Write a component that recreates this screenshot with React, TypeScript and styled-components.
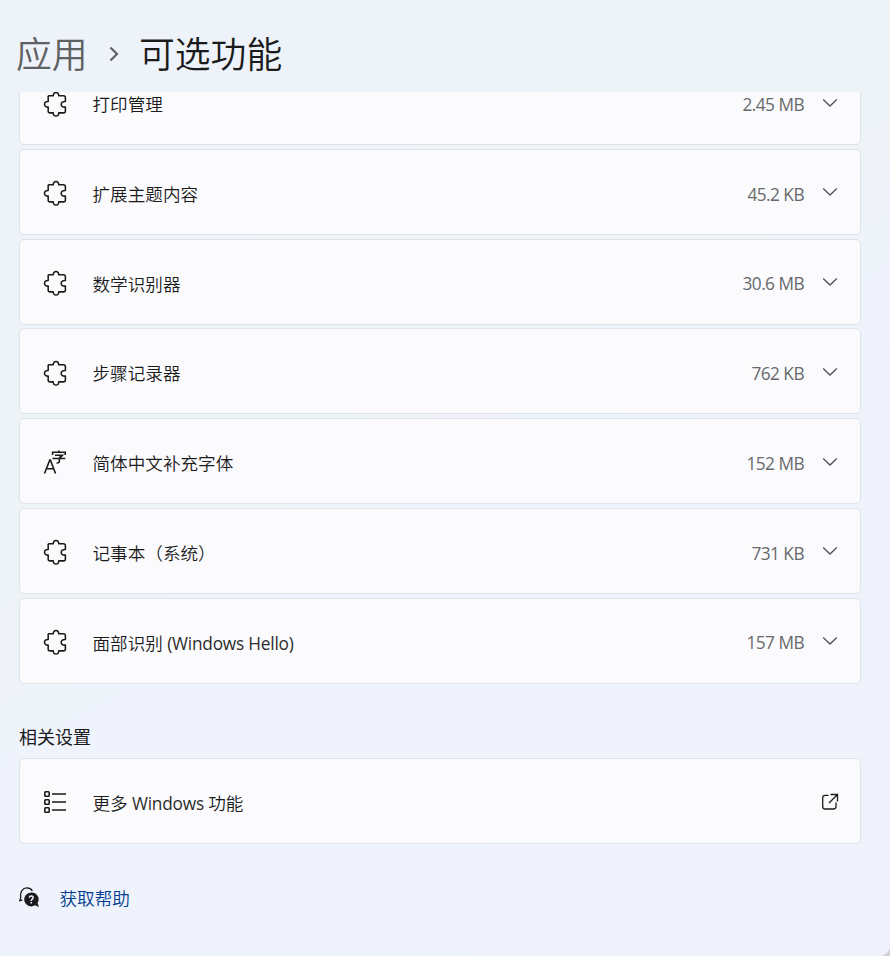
import React from "react";
import styled, { createGlobalStyle, css } from "styled-components";

const GlobalStyle = createGlobalStyle`
  * { box-sizing: border-box; }
  html, body { margin: 0; padding: 0; }
  body {
    background: #cfd1d3;
    color: #1b1b1b;
    font-family: "Open Sans", "Noto Sans CJK SC", sans-serif;
  }
`;

const Window = styled.main`
  width: 890px;
  height: 956px;
  overflow: hidden;
  padding-left: 19px;
  border-bottom-right-radius: 10px;
  background: linear-gradient(151deg, #eef3fb 0%, #eef3fa 18%, #eef3f7 34%, #eef3f7 42%, #eff3fb 52%, #eff2fb 100%);
`;

const Breadcrumb = styled.h1`
  display: flex;
  align-items: center;
  height: 92px;
  margin: 0 0 0 -3px;
  padding-top: 15px;
  font-size: 35.8px;
  font-weight: 350;
  line-height: 54px;
  white-space: nowrap;
`;

const Parent = styled.span`
  width: 72px;
  color: #5f6163;
`;

const Separator = styled.svg`
  width: 12px;
  height: 16px;
  margin: 0 19px 0 20px;
`;

const Features = styled.section`
  display: flex;
  flex-direction: column;
  gap: 3.75px;
  width: 842px;
  height: 591.6px;
  overflow: hidden;
  justify-content: flex-end;
`;

const Card = styled.div`
  display: flex;
  flex: none;
  align-items: center;
  width: 842px;
  height: 86px;
  padding: 0 21px 0 23px;
  border: 1px solid #e0e4ea;
  border-radius: 5px;
  background: rgba(252, 252, 254, 0.9);
  background-clip: padding-box;
`;

const IconSlot = styled.span`
  display: flex;
  width: 26px;
  height: 26px;
  margin-top: 3px;
`;

const textLine = css`
  font-size: 17.6px;
  font-weight: 350;
  line-height: 26px;
  white-space: pre;
`;

const Name = styled.span`
  ${textLine}
  flex: 1;
  margin: 4.2px 0 0 23.5px;
`;

const Latin = styled.span`
  color: #2c2c2c;
  font-size: 17.3px;
  font-weight: 400;
  line-height: 0;
  letter-spacing: -0.22px;
`;

const Size = styled.span`
  color: #67696b;
  font-size: 17.3px;
  font-weight: 400;
  line-height: 26px;
  letter-spacing: -0.55px;
  margin: 5.8px 18px 0 0;
`;

const Chevron = styled.svg`
  width: 16px;
  height: 10px;
  margin: 1px 1px 0 0;
`;

const SectionTitle = styled.h2`
  ${textLine}
  margin: 40.4px 0 8px;
  font-size: 18px;
  font-weight: 400;
`;

const Help = styled.a`
  display: flex;
  align-items: center;
  margin-top: 41px;
  color: #003e92;
  text-decoration: none;
`;

const HelpText = styled.span`
  ${textLine}
  margin-left: 19.5px;
`;

const OpenMark = styled.svg`
  width: 18px;
  height: 18px;
  margin-top: 3px;
`;

const Puzzle = () => (
  <svg width="26" height="26" viewBox="-.3 -.4 26.600 26.600" fill="none" stroke="#1b1b1b" strokeWidth="1.6" strokeLinejoin="round">
    <path d="M5 4.500h5.200c-.1-2 1-3.400 2.800-3.400s2.900 1.400 2.800 3.400H20.600q2 0 2 2v3.800c-2.600-.2-4.300.8-4.300 2.900s1.700 3.100 4.300 2.900V20q0 2-2 2h-4.800c.1 2-1 3.200-2.800 3.200s-2.900-1.200-2.800-3.200H7q-2 0-2-2v-3.900c-2.300.1-3.800-1-3.800-2.900S2.700 10.200 5 10.300V4.500" />
  </svg>
);

const FontIcon = () => (
  <svg width="26" height="26" viewBox="0 0 26 26" fill="none" stroke="#1b1b1b" strokeWidth="1.6">
    <path d="M1.500 23.500 6.800 10h.6L12.500 23.500M3.400 18.800h7.200M9.600 5V2.300h12.600V5M15.900.6v1.900M12 5.300h7.500c-.8 1.200-1.800 1.700-3.200 2.300M9.500 8.500h12.800M16.300 7.600v3.800q0 1.700-2.800 1.600" />
  </svg>
);

const ListIcon = () => (
  <svg width="26" height="26" viewBox="0 -.5 26 26" fill="none" stroke="#1b1b1b" strokeWidth="1.6">
    <rect x="1.800" y="2.300" width="4.400" height="4.400" rx=".8" />
    <rect x="1.800" y="10.300" width="4.400" height="4.400" rx=".8" />
    <rect x="1.800" y="18.300" width="4.400" height="4.400" rx=".8" />
    <path d="M9 4.500h14M9 12.500h14M9 20.500h14" />
  </svg>
);

const OpenIcon = () => (
  <OpenMark viewBox="0 0 18 18" fill="none" stroke="#1b1b1b" strokeWidth="1.3">
    <path d="M7.500 2.300H4Q1.700 2.300 1.700 4.600V13.500Q1.700 16 4 16H12.500Q15 16 15 13.500V9.500M9.500 1.500h7v7M16.300 1.700 8 10" />
  </OpenMark>
);

const HelpIcon = () => (
  <svg width="21" height="22" viewBox="0 0 21 22" fill="none">
    <path d="M3.300 13 .8 13.600l1-3.500C.7 4.900 3.800.9 7.800.9c2.600 0 4.600 1.200 5.600 3" stroke="#1b1b1b" strokeWidth="1.300" />
    <path d="M12.200 5.400a7 7 0 1 0 3.800 12.900l4 1.600-1.400-3.900A7 7 0 0 0 12.200 5.400Z" fill="#1b1b1b" />
    <path d="M10.300 10.600c.1-2.400 4-2.200 3.800.1-.1 1.400-1.900 1.500-1.900 3.200M12.200 15v1.500" stroke="#eff2fb" strokeWidth="1.500" />
  </svg>
);

const features: { name: React.ReactNode; size: string; font?: boolean }[] = [
  { name: "打印管理", size: "2.45 MB" },
  { name: "扩展主题内容", size: "45.2 KB" },
  { name: "数学识别器", size: "30.6 MB" },
  { name: "步骤记录器", size: "762 KB" },
  { name: "简体中文补充字体", size: "152 MB", font: true },
  { name: "记事本（系统）", size: "731 KB" },
  { name: <>面部识别<Latin> (Windows Hello)</Latin></>, size: "157 MB" },
];

export default function App() {
  return (
    <>
      <GlobalStyle />
      <Window>
        <Breadcrumb>
          <Parent>应用</Parent>
          <Separator viewBox="0 0 12 16" fill="none" stroke="#5f6163" strokeWidth="2.200">
            <path d="m2.500 1.500 6.500 6.500-6.500 6.500" />
          </Separator>
          <span>可选功能</span>
        </Breadcrumb>
        <Features>
          {features.map((f, i) => (
            <Card key={i}>
              <IconSlot>{f.font ? <FontIcon /> : <Puzzle />}</IconSlot>
              <Name>{f.name}</Name>
              <Size>{f.size}</Size>
              <Chevron viewBox="0 0 16 10" fill="none" stroke="#4f5153" strokeWidth="1.300">
                <path d="m1.200 1.500 6.800 6.500 6.800-6.500" />
              </Chevron>
            </Card>
          ))}
        </Features>
        <SectionTitle>相关设置</SectionTitle>
        <Card>
          <IconSlot><ListIcon /></IconSlot>
          <Name>更多<Latin> Windows </Latin>功能</Name>
          <OpenIcon />
        </Card>
        <Help href="#">
          <HelpIcon />
          <HelpText>获取帮助</HelpText>
        </Help>
      </Window>
    </>
  );
}
